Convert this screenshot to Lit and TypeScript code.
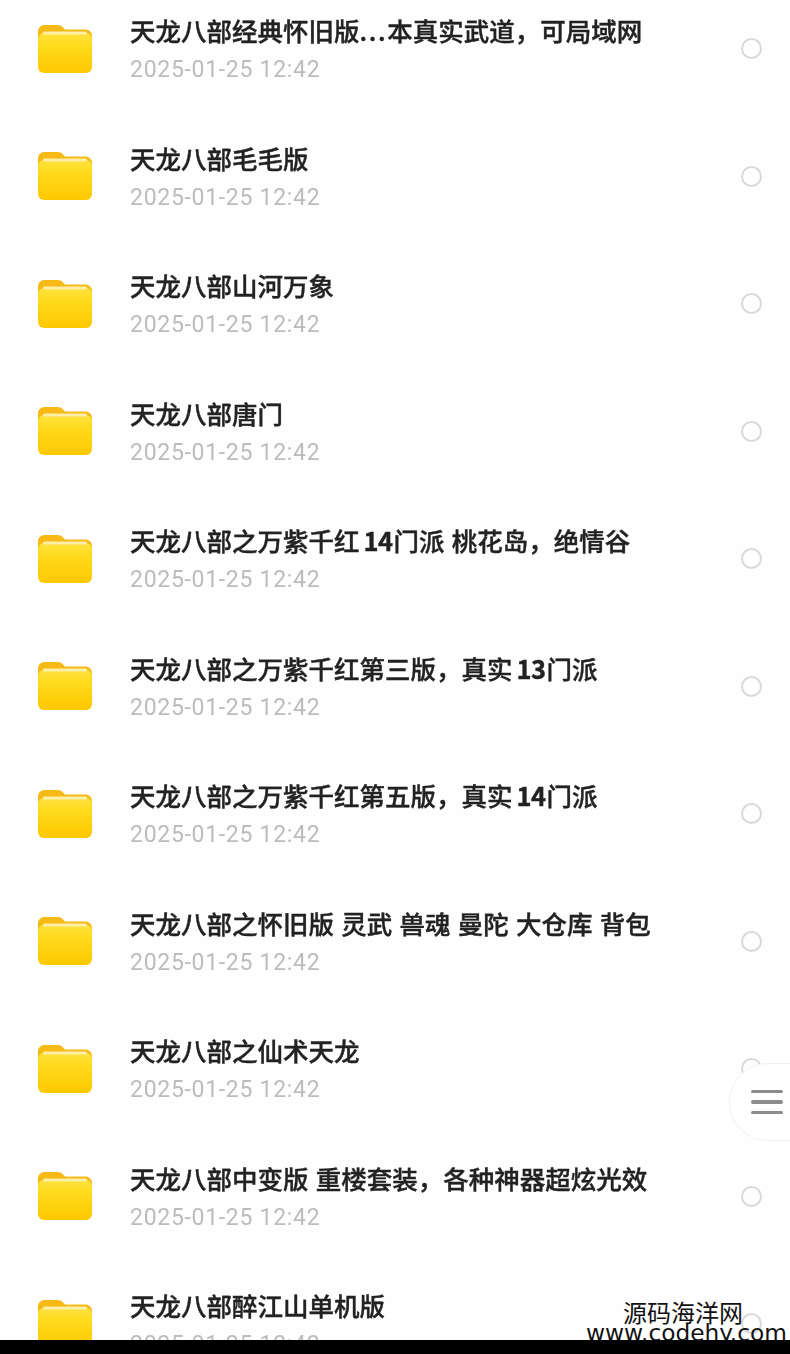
import {css, html, LitElement} from 'lit';
import {customElement} from 'lit/decorators.js';

const TITLES = [
    '天龙八部经典怀旧版...本真实武道，可局域网',
    '天龙八部毛毛版',
    '天龙八部山河万象',
    '天龙八部唐门',
    '天龙八部之万紫千红14门派 桃花岛，绝情谷',
    '天龙八部之万紫千红第三版，真实13门派',
    '天龙八部之万紫千红第五版，真实14门派',
    '天龙八部之怀旧版 灵武 兽魂 曼陀 大仓库 背包',
    '天龙八部之仙术天龙',
    '天龙八部中变版 重楼套装，各种神器超炫光效',
    '天龙八部醉江山单机版',
];

@customElement('app-root')
export class AppRoot extends LitElement {
    folder(i: number) {
        return html`
            <svg class="folder" viewBox="0 0 56 50">
                <defs>
                    <linearGradient id="body${i}" x1="0" y1="0" x2="0" y2="1">
                        <stop offset="0" stop-color="#ffe23f"/>
                        <stop offset="0.3" stop-color="#ffdb1e"/>
                        <stop offset="1" stop-color="#fdc800"/>
                    </linearGradient>
                </defs>
                <path d="M1 8c0-4 2.500-7 6.500-7h13c3 0 4.500 1 6 3l1.500 1.500h20c4 0 7 2.500 7 6.500v8H1z" fill="#f7b916"/>
                <rect x="1" y="9" width="54" height="40" rx="6" fill="url(#body${i})"/>
                <rect x="6" y="7.500" width="44" height="3" rx="1.500" fill="#fdeea8"/>
            </svg>
        `;
    }

    // digits and the ellipsis sit tighter/looser than the CJK run, so they get their own spans
    titleParts(title: string) {
        return title.split(/(\d+|\.\.\.)/).map((part) => {
            if (part === '...') return html`<span class="dots">${part}</span>`;
            if (/^\d+$/.test(part)) return html`<span class="num">${part}</span>`;
            return part;
        });
    }

    render() {
        return html`
            <div class="screen">
                <div class="list">
                    ${TITLES.map((title, i) => html`
                        <div class="row">
                            ${this.folder(i)}
                            <div class="info">
                                <div class="title">${this.titleParts(title)}</div>
                                <div class="date">2025-01-25 12:42</div>
                            </div>
                            <div class="radio"></div>
                        </div>
                    `)}
                </div>
                <div class="float-btn">
                    <span></span><span></span><span></span>
                </div>
                <div class="watermark">
                    <div class="wm-name">源码海洋网</div>
                    <div class="wm-url">www.codehy.com</div>
                </div>
            </div>
            <div class="bar"></div>
        `;
    }

    static styles = css`
        :host {
            display: block;
            width: 790px;
            height: 1354px;
            background: #fff;
            overflow: hidden;
            font-family: "Noto Sans CJK SC", "Noto Sans", sans-serif;
        }

        .screen {
            position: relative;
            height: 1340px;
            overflow: hidden;
            background: #fefefe;
        }

        .list {
            margin-top: -15px;
            filter: blur(0.5px);
        }

        .row {
            height: 127.5px;
            display: flex;
            align-items: center;
            padding-left: 37px;
            padding-right: 28.5px;
            box-sizing: border-box;
        }

        .folder {
            width: 56px;
            height: 50px;
            flex: none;
        }

        .info {
            flex: 1;
            margin-left: 37px;
            display: flex;
            flex-direction: column;
            gap: 6px;
            margin-top: 3px;
        }

        .title {
            font-size: 25.5px;
            line-height: 34px;
            font-weight: 500;
            color: #222;
            white-space: nowrap;
            word-spacing: 1.5px;
            -webkit-text-stroke: 0.4px #222;
        }

        .num {
            font-weight: 700;
            margin: 0 1px 0 4px;
            letter-spacing: -0.5px;
        }

        .dots {
            letter-spacing: 1.6px;
        }

        .date {
            font-family: Roboto, sans-serif;
            font-size: 23px;
            line-height: 34px;
            color: #bcbcbc;
            letter-spacing: 0.7px;
        }

        .radio {
            width: 17px;
            height: 17px;
            border: 2.5px solid #d9d9d9;
            border-radius: 50%;
            flex: none;
        }

        .float-btn {
            position: absolute;
            left: 729px;
            top: 1063px;
            width: 100px;
            height: 78px;
            border-radius: 39px;
            background: #fff;
            border: 1px solid #f1f1f1;
            box-sizing: border-box;
            padding-left: 21px;
            display: flex;
            flex-direction: column;
            justify-content: center;
            gap: 7px;
            filter: blur(0.4px);
        }

        .float-btn span {
            width: 32px;
            height: 3.5px;
            border-radius: 2px;
            background: #8c8c8c;
        }

        .watermark {
            position: absolute;
            right: 3px;
            top: 1301px;
            text-align: right;
            color: #111;
        }

        .wm-name {
            font-size: 24px;
            line-height: 21px;
            padding-right: 44px;
        }

        .wm-url {
            font-family: "DejaVu Sans", sans-serif;
            font-size: 23.3px;
            line-height: 22px;
        }

        .bar {
            height: 14px;
            background: #000;
        }
    `;
}
